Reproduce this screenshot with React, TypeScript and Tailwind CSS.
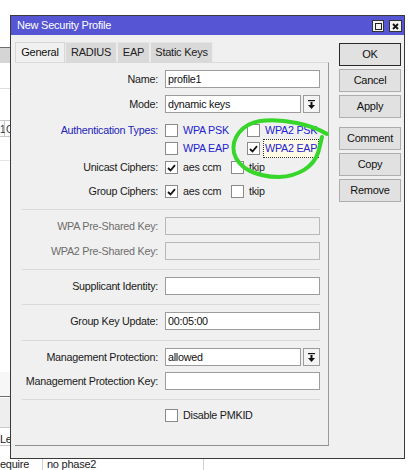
import React from "react"

const font = "font-['Liberation_Sans',Arial,sans-serif]"

type FieldProps = {
    value?: string
    disabled?: boolean
    dropdown?: boolean
}

const DropArrow = () => (
    <svg width="7" height="9" viewBox="0 0 7 9">
        <rect x="0" y="0" width="7" height="1.2" fill="#111" />
        <rect x="2.5" y="2" width="2" height="3" fill="#111" />
        <polygon points="0,5 7,5 3.5,9" fill="#111" />
    </svg>
)

const Field = ({ value = "", disabled, dropdown }: FieldProps) => {
    if (dropdown) {
        return (
            <div className="flex h-[18px] w-[155px] gap-[2px]">
                <div className="flex h-full flex-1 items-center border border-[#9c9c9c] bg-white px-[2px] text-[#111]">
                    {value}
                </div>
                <div className="flex h-full w-[17px] items-center justify-center border border-[#9c9c9c] bg-[#f4f4f4]">
                    <DropArrow />
                </div>
            </div>
        )
    }
    return (
        <div
            className={
                disabled
                    ? "h-[18px] w-[155px] border border-[#b9b9b9] bg-[#f0f0f0]"
                    : "flex h-[18px] w-[155px] items-center border border-[#9c9c9c] bg-white px-[2px] text-[#111]"
            }
        >
            {value}
        </div>
    )
}

type RowProps = {
    label: string
    tone?: "normal" | "muted" | "blue"
    className?: string
    children: React.ReactNode
}

const Row = ({ label, tone = "normal", className = "", children }: RowProps) => {
    const labelColor =
        tone === "muted" ? "text-[#6d6d6d]" : tone === "blue" ? "text-[#2424b8]" : "text-[#1a1a1a]"
    return (
        <div className={`flex items-center gap-[7px] ${className}`}>
            <div className={`w-[136px] whitespace-nowrap text-right ${labelColor}`}>{label}</div>
            {children}
        </div>
    )
}

type CheckProps = {
    label: string
    checked?: boolean
    blue?: boolean
    focused?: boolean
    className?: string
}

const Check = ({ label, checked, blue, focused, className = "" }: CheckProps) => (
    <div className={`flex items-center gap-[3px] ${className}`}>
        <div className="flex h-[13px] w-[13px] shrink-0 items-center justify-center border border-[#8a8a8a] bg-white">
            {checked && (
                <svg width="9" height="8" viewBox="0 0 9 8">
                    <polyline points="1,4 3.5,6.5 8,1.2" fill="none" stroke="#111" strokeWidth="1.8" />
                </svg>
            )}
        </div>
        <span
            className={`whitespace-nowrap px-[1px] ${blue ? "text-[#2424d0]" : "text-[#1a1a1a]"} ${
                focused ? "border border-dotted border-[#333] bg-[#fffbe6]" : "border border-transparent"
            }`}
        >
            {label}
        </span>
    </div>
)

const Separator = ({ className = "" }: { className?: string }) => (
    <div className={`ml-[7px] mr-[8px] h-px bg-[#d9d9d9] ${className}`} />
)

const DialogButton = ({ label, primary }: { label: string; primary?: boolean }) => (
    <div
        className={`flex h-[23px] w-[62px] items-center justify-center bg-[#e1e1e1] text-[11px] text-[#111] ${
            primary ? "border border-[#2a2a2a]" : "border border-[#adadad]"
        }`}
    >
        {label}
    </div>
)

const tabs = ["General", "RADIUS", "EAP", "Static Keys"]
const tabWidths = ["w-[50px]", "w-[52px]", "w-[33px]", "w-[63px]"]

export default function App() {
    return (
        <div
            className={`relative h-[470px] w-[408px] overflow-hidden bg-white text-[10.75px] tracking-[-0.25px] ${font}`}
        >
            {/* background window peeking out on the left */}
            <div className="absolute left-0 top-[47px] h-px w-[40px] bg-[#6e6e6e]" />
            <div className="absolute left-0 top-[48px] h-[15px] w-[40px] bg-[#d5d5d5]" />
            <div className="absolute left-0 top-[88px] h-px w-[40px] bg-[#dedede]" />
            <div className="absolute left-0 top-[120px] h-px w-[40px] bg-[#c9c9c9]" />
            <div className="absolute left-0 top-[136px] h-px w-[40px] bg-[#c9c9c9]" />
            <div className="absolute left-[4px] top-[120px] h-[16px] w-px bg-[#c9c9c9]" />
            <div className="absolute left-0 top-[122px] text-[10px] text-[#333]">1</div>
            <div className="absolute left-[6px] top-[122px] text-[10px] text-[#333]">C</div>
            <div className="absolute left-0 top-[160px] h-px w-[40px] bg-[#e4e4e4]" />

            <div className="absolute left-0 top-[372px] h-[25px] w-[40px] border-b border-[#6e6e6e] bg-[#f7f7f7]" />
            <div className="absolute left-0 top-[398px] h-[29px] w-[40px] bg-[#eeeeee]" />
            <div className="absolute left-0 top-[427px] h-px w-[40px] bg-[#c9c9c9]" />
            <div className="absolute left-0 top-[431px] text-[11px] text-[#222]">Le</div>
            <div className="absolute left-0 top-[445px] h-px w-[40px] bg-[#c9c9c9]" />
            <div className="absolute left-0 top-[458px] flex h-[12px] w-[204px] border-r border-[#d0d0d0] text-[11px] leading-[13px] text-[#222]">
                <div className="w-[43px] border-r border-[#d0d0d0]">equire</div>
                <div className="pl-[4px]">no phase2</div>
            </div>

            {/* dialog */}
            <div className="absolute left-[10px] top-[15px] flex h-[444px] w-[395px] flex-col border border-[#3a3a3a] bg-[#f0f0f0]">
                <div className="flex h-[19px] shrink-0 items-center justify-between bg-[#5656d4] pl-[6px] pr-[2px] text-[11px] text-white">
                    <span>New Security Profile</span>
                    <div className="flex gap-[5px] pt-[1px]">
                        <div className="flex h-[12px] w-[12px] items-center justify-center border border-[#333] bg-[#f2f2f2]">
                            <div className="h-[7px] w-[7px] border border-[#222]" />
                        </div>
                        <div className="flex h-[12px] w-[13px] items-center justify-center border border-[#333] bg-[#f2f2f2]">
                            <svg width="7" height="7" viewBox="0 0 7 7">
                                <path d="M1 1 L6 6 M6 1 L1 6" stroke="#111" strokeWidth="1.8" />
                            </svg>
                        </div>
                    </div>
                </div>

                <div className="flex flex-1 pl-[4px] pr-[3px] pt-[7px]">
                    <div className="flex w-[314px] flex-col">
                        <div className="flex h-[20px]">
                            {tabs.map((t, i) => (
                                <div
                                    key={t}
                                    className={`flex h-[20px] items-center justify-center text-[11px] ${tabWidths[i]} ${
                                        i === 0
                                            ? "relative z-10 border border-b-0 border-[#d6d6d6] bg-[#f0f0f0] text-[#111]"
                                            : "border border-b-0 border-l-[#ececec] border-r-[#ececec] border-t-[#e4e4e4] bg-[#d9d9d9] text-[#222]"
                                    }`}
                                >
                                    {t}
                                </div>
                            ))}
                        </div>

                        <div className="flex h-[384px] flex-col border-b border-r border-t border-b-[#8f8f8f] border-r-[#9a9a9a] border-t-[#d9d9d9] pt-[7px]">
                            <Row label="Name:" className="ml-[7px] h-[18px]">
                                <Field value="profile1" />
                            </Row>
                            <Row label="Mode:" className="ml-[7px] mt-[7px] h-[18px]">
                                <Field value="dynamic keys" dropdown />
                            </Row>

                            <Row label="Authentication Types:" tone="blue" className="ml-[7px] mt-[9px] h-[17px]">
                                <div className="flex">
                                    <Check label="WPA PSK" blue className="w-[82px]" />
                                    <Check label="WPA2 PSK" blue />
                                </div>
                            </Row>
                            <div className="ml-[150px] mt-[1px] flex h-[17px] items-center">
                                <Check label="WPA EAP" blue className="w-[82px]" />
                                <Check label="WPA2 EAP" blue checked focused />
                            </div>

                            <Row label="Unicast Ciphers:" className="ml-[7px] mt-[2px] h-[17px]">
                                <div className="flex">
                                    <Check label="aes ccm" checked className="w-[66px]" />
                                    <Check label="tkip" />
                                </div>
                            </Row>
                            <Row label="Group Ciphers:" className="ml-[7px] mt-[7px] h-[17px]">
                                <div className="flex">
                                    <Check label="aes ccm" checked className="w-[66px]" />
                                    <Check label="tkip" />
                                </div>
                            </Row>

                            <Separator className="mt-[9px]" />

                            <Row label="WPA Pre-Shared Key:" tone="muted" className="ml-[7px] mt-[7px] h-[18px]">
                                <Field disabled />
                            </Row>
                            <Row label="WPA2 Pre-Shared Key:" tone="muted" className="ml-[7px] mt-[7px] h-[18px]">
                                <Field disabled />
                            </Row>

                            <Separator className="mt-[9px]" />

                            <Row label="Supplicant Identity:" className="ml-[7px] mt-[7px] h-[18px]">
                                <Field />
                            </Row>

                            <Separator className="mt-[9px]" />

                            <Row label="Group Key Update:" className="ml-[7px] mt-[7px] h-[18px]">
                                <Field value="00:05:00" />
                            </Row>

                            <Separator className="mt-[10px]" />

                            <Row label="Management Protection:" className="ml-[7px] mt-[7px] h-[18px]">
                                <Field value="allowed" dropdown />
                            </Row>
                            <Row label="Management Protection Key:" className="ml-[7px] mt-[6px] h-[18px]">
                                <Field />
                            </Row>

                            <Separator className="mt-[9px]" />

                            <div className="ml-[150px] mt-[7px] flex h-[16px] items-center">
                                <Check label="Disable PMKID" />
                            </div>
                        </div>
                    </div>

                    <div className="ml-[10px] mt-[1px] flex flex-col gap-[3px]">
                        <DialogButton label="OK" primary />
                        <DialogButton label="Cancel" />
                        <DialogButton label="Apply" />
                        <div className="mt-[6px] flex flex-col gap-[3px]">
                            <DialogButton label="Comment" />
                            <DialogButton label="Copy" />
                            <DialogButton label="Remove" />
                        </div>
                    </div>
                </div>
            </div>

            {/* hand-drawn green highlight */}
            <svg className="pointer-events-none absolute left-0 top-0" width="408" height="470" viewBox="0 0 408 470">
                <path
                    d="M 327 134 C 312 125, 284 118, 260 121 C 242 124, 231 138, 234 153 C 238 168, 256 177, 279 177 C 299 176, 313 167, 318 153 C 320 146, 321 141, 322 137"
                    fill="none"
                    stroke="#36d62a"
                    strokeWidth="4"
                    strokeLinecap="round"
                />
            </svg>
        </div>
    )
}
